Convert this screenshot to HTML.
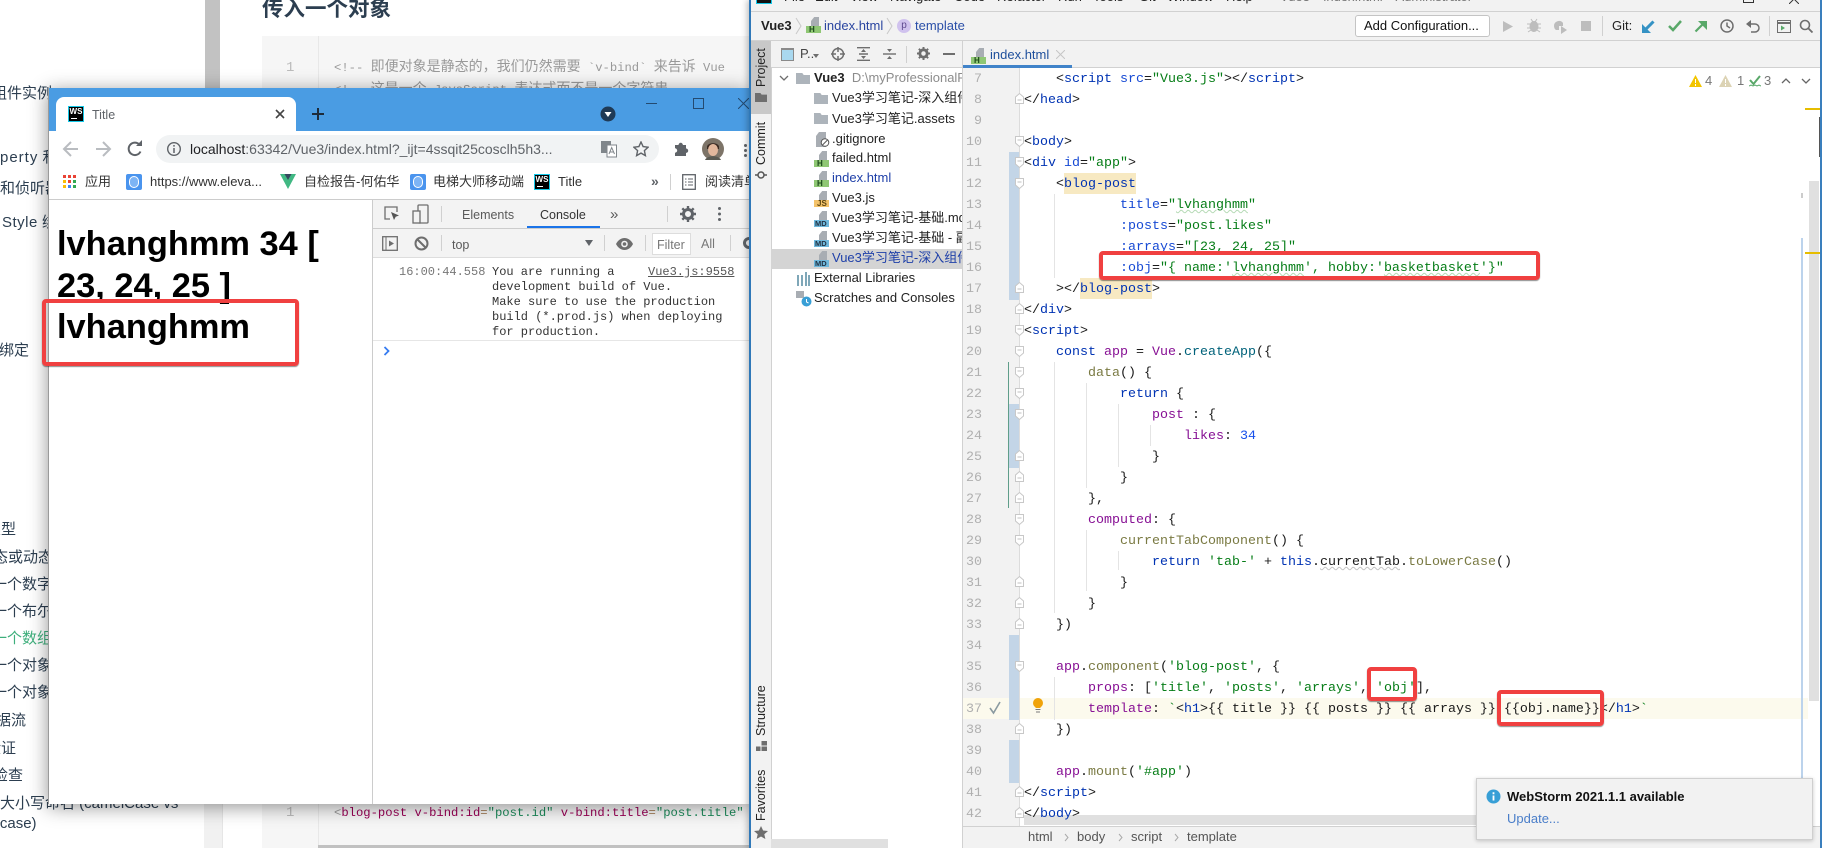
<!DOCTYPE html>
<html><head><meta charset="utf-8"><title>Vue3</title>
<style>
html,body{margin:0;padding:0;background:#fff}
body{position:relative;width:1822px;height:848px;overflow:hidden;font-family:"Liberation Sans","Noto Sans CJK SC",sans-serif;font-size:13px;color:#222}
.a{position:absolute}
.t{position:absolute;white-space:nowrap;line-height:20px}
.s{position:absolute;white-space:nowrap;line-height:20px;font-size:15px;color:#2c3e50}
.m{font-family:"Liberation Mono","Noto Sans CJK SC",monospace}
#chrome{position:absolute;left:48px;top:88px;width:701px;height:716px;background:#fff;overflow:hidden;box-shadow:0 3px 18px rgba(0,0,0,.42)}
#ide{position:absolute;left:749px;top:0;width:1073px;height:848px;background:#fff;overflow:hidden;box-shadow:-2px 0 6px rgba(0,0,0,.25)}
.bar{background:#f2f2f2}
pre{margin:0;position:absolute;font-family:"Liberation Mono",monospace;font-size:13.33px;line-height:21px;color:#1a1a1a}
.b{color:#0033b3}.at{color:#174ad4}.g{color:#067d17}.p{color:#871094}.o{color:#7a7a43}.n{color:#1750eb}.f{color:#00627a}
.w{text-decoration:underline wavy #b5dab5 1px}
.w2{text-decoration:underline wavy #c4c4c4 1px}
.red{position:absolute;border:4px solid #f04040;border-radius:4px;box-sizing:border-box;box-shadow:0 1px 1px rgba(0,0,0,.45);z-index:30}
.ws{position:absolute;width:16px;height:16px;background:#000;border:1.5px solid #14c8e8;box-sizing:border-box;color:#fff;font:bold 8px/9px "Liberation Sans",sans-serif;text-align:center;overflow:hidden}
.ws:after{content:"";position:absolute;left:2px;bottom:2px;width:6px;height:1.5px;background:#fff}
.fi{position:absolute;width:15px;height:16px;font:bold 8px/7px "Liberation Sans",sans-serif;font-style:normal;color:#1c4a1c;text-indent:3px}
.fi b{position:absolute;left:0;bottom:0;width:15px;height:7px;font-size:8px;line-height:7px;text-align:left;background:#8fc774}
.fi:before{content:"";position:absolute;left:5px;top:0;width:8px;height:9px;background:#a8adb3;clip-path:polygon(40% 0,100% 0,100% 100%,0 100%,0 45%)}
.fi.md b{background:#6fb8dc;color:#234;text-indent:1px;font-size:7.5px}
.fi.js b{background:#f4c36b;color:#5a4410}
.fo{position:absolute;width:14px;height:11px;background:#adb4bb;clip-path:polygon(0 0,45% 0,55% 18%,100% 18%,100% 100%,0 100%)}
.v{position:absolute;white-space:nowrap;transform:rotate(-90deg);transform-origin:0 0;font-size:12.5px;line-height:14px;color:#222}
.sep{position:absolute;width:1px;background:#d0d0d0}
.tree{position:absolute;white-space:nowrap;line-height:20px;font-size:13px;color:#222}
</style></head><body>

<!-- background docs page -->
<div class="a" style="left:205px;top:0;width:15px;height:90px;background:#c2c2c2"></div>
<div class="a" style="left:204px;top:800px;width:18px;height:48px;background:#f1f1f1;border-right:1px solid #e6e6e6"></div>
<div class="t" style="left:262px;top:-3px;font-size:21.5px;font-weight:bold;line-height:24px;color:#2c3e50">传入一个对象</div>
<div class="a" style="left:262px;top:36px;width:560px;height:812px;background:#f6f6f6"></div>
<div class="a" style="left:318px;top:36px;width:1px;height:812px;background:#e8e8e8"></div>
<div class="t m" style="left:286px;top:58px;color:#bbb;font-size:14px">1</div>
<div class="t m" style="left:334px;top:58px;color:#999;font-size:12.2px">&lt;!-- <span style="font-size:14px;letter-spacing:0">即便对象是静态的，我们仍然需要</span> `v-bind` <span style="font-size:14px">来告诉</span> Vue</div>
<div class="t m" style="left:334px;top:80px;color:#999;font-size:12.2px">&lt;!-- <span style="font-size:14px">这是一个</span> JavaScript <span style="font-size:14px">表达式而不是一个字符串</span></div>
<div class="t m" style="left:286px;top:803px;color:#bbb;font-size:14px">1</div>
<div class="t m" style="left:334px;top:803px;color:#999;font-size:12.2px">&lt;<span style="color:#905">blog-post v-bind:id</span><span style="color:#a67f59">=</span><span style="color:#1c8a5a">"post.id"</span> <span style="color:#905">v-bind:title</span><span style="color:#a67f59">=</span><span style="color:#1c8a5a">"post.title"</span></div>
<div class="a" style="left:318px;top:845px;width:431px;height:3px;background:#c1c1c1"></div>

<!-- sidebar -->
<div class="s" style="left:-8px;top:84px">组件实例</div>
<div class="s" style="left:0;top:148px"><span style="letter-spacing:1px">perty</span> 和</div>
<div class="s" style="left:0;top:179px">和侦听器</div>
<div class="s" style="left:2px;top:213px"><span style="letter-spacing:.5px">Style</span> 绑定</div>
<div class="s" style="left:-1px;top:341px">绑定</div>
<div class="s" style="left:-14px;top:520px">类型</div>
<div class="s" style="left:-22px;top:548px">静态或动态</div>
<div class="s" style="left:-23px;top:575px">入一个数字</div>
<div class="s" style="left:-23px;top:602px">入一个布尔</div>
<div class="s" style="left:-23px;top:629px;color:#3eaf7c">入一个数组</div>
<div class="s" style="left:-23px;top:656px">入一个对象</div>
<div class="s" style="left:-23px;top:683px">入一个对象</div>
<div class="s" style="left:-19px;top:711px">数据流</div>
<div class="s" style="left:-14px;top:739px">验证</div>
<div class="s" style="left:-22px;top:766px">型检查</div>
<div class="s" style="left:0;top:794px">大小写命名 (camelCase vs</div>
<div class="s" style="left:-46px;top:814px">kebab-case)</div>

<!-- Chrome window -->
<div id="chrome">
  <div class="a" style="left:0;top:0;width:701px;height:43px;background:#4a9ce3"></div>
  <div class="a" style="left:8px;top:9px;width:240px;height:34px;background:#fff;border-radius:8px 8px 0 0"></div>
  <div class="ws" style="left:20px;top:18px">WS</div>
  <div class="t" style="left:44px;top:17px;font-size:12.5px;color:#5f6368">Title</div>
  <svg class="a" style="left:226px;top:20px" width="12" height="12" viewBox="0 0 12 12"><path d="M2 2l8 8M10 2l-8 8" stroke="#444" stroke-width="1.6"/></svg>
  <svg class="a" style="left:262px;top:18px" width="16" height="16" viewBox="0 0 16 16"><path d="M8 2v12M2 8h12" stroke="#1d2b3a" stroke-width="2"/></svg>
  <svg class="a" style="left:552px;top:18px" width="16" height="16" viewBox="0 0 16 16"><circle cx="8" cy="8" r="7.5" fill="#1f3a56"/><path d="M4.5 6h7L8 11z" fill="#fff"/></svg>
  <div class="a" style="left:598px;top:15px;width:11px;height:1px;background:#244a70"></div>
  <div class="a" style="left:645px;top:10px;width:9px;height:9px;border:1px solid #244a70"></div>
  <svg class="a" style="left:690px;top:10px" width="11" height="11"><path d="M0 0l11 11M11 0L0 11" stroke="#244a70" stroke-width="1"/></svg>

  <!-- toolbar -->
  <svg class="a" style="left:13px;top:52px" width="20" height="18" viewBox="0 0 20 18"><path d="M17 9H4M10 2L3 9l7 7" fill="none" stroke="#b9bcc0" stroke-width="2"/></svg>
  <svg class="a" style="left:45px;top:52px" width="20" height="18" viewBox="0 0 20 18"><path d="M3 9h13M10 2l7 7-7 7" fill="none" stroke="#b9bcc0" stroke-width="2"/></svg>
  <svg class="a" style="left:78px;top:52px" width="18" height="18" viewBox="0 0 18 18"><path d="M14.5 11.5A6.2 6.2 0 1 1 13.4 4.6" fill="none" stroke="#5f6368" stroke-width="2"/><path d="M10 6h6V0z" fill="#5f6368"/></svg>
  <div class="a" style="left:108px;top:47px;width:503px;height:28px;background:#f1f3f4;border-radius:14px"></div>
  <svg class="a" style="left:118px;top:53px" width="16" height="16" viewBox="0 0 16 16"><circle cx="8" cy="8" r="6.3" fill="none" stroke="#5f6368" stroke-width="1.4"/><path d="M8 7v5M8 4v1.6" stroke="#5f6368" stroke-width="1.5"/></svg>
  <div class="t" style="left:142px;top:51px;font-size:14px;color:#5f6368"><span style="color:#202124">localhost</span>:63342/Vue3/index.html?_ijt=4ssqit25cosclh5h3...</div>
  <svg class="a" style="left:553px;top:52px" width="16" height="18" viewBox="0 0 16 18"><rect x="0" y="1" width="10" height="12" fill="#80868b"/><rect x="6" y="5" width="9.5" height="12" fill="#fff" stroke="#80868b"/><path d="M8 14l2.7-6.5L13.5 14M9 12h3.5" fill="none" stroke="#80868b"/></svg>
  <svg class="a" style="left:585px;top:53px" width="16" height="16" viewBox="0 0 16 16"><path d="M8 1l2.1 4.6 5 .6-3.7 3.4 1 5L8 12.1 3.6 14.6l1-5L.9 6.2l5-.6z" fill="none" stroke="#5f6368" stroke-width="1.4"/></svg>
  <svg class="a" style="left:625px;top:52px" width="16" height="18" viewBox="0 0 16 18"><path d="M2 5h3.500a2.200 2.200 0 1 1 4.400 0H13v3.500a2.200 2.200 0 1 1 0 4.400V16H2v-3.300a2.200 2.200 0 1 0 0-4.400z" fill="#5f6368"/></svg>
  <svg class="a" style="left:654px;top:50px" width="22" height="22" viewBox="0 0 22 22"><ellipse cx="11" cy="11" rx="11" ry="11" fill="#7d7468"/><path d="M5 9c0-5 12-5 12 0v2H5z" fill="#3a2a22"/><ellipse cx="11" cy="12" rx="5" ry="6" fill="#e2b79c"/><path d="M3 22c2-5 14-5 16 0z" fill="#5a5a52"/></svg>
  <div class="a" style="left:696px;top:56px;width:3px;height:3px;border-radius:2px;background:#5f6368;box-shadow:0 5px 0 #5f6368,0 10px 0 #5f6368"></div>

  <!-- bookmarks -->
  <div class="a" style="left:15px;top:87px;width:3px;height:3px;background:#e94335;box-shadow:5px 0 #e94335,10px 0 #e94335,0 5px #fbbc05,5px 5px #e94335,10px 5px #34a853,0 10px #fbbc05,5px 10px #4285f4,10px 10px #34a853"></div>
  <div class="t" style="left:37px;top:84px;font-size:13px;color:#333">应用</div>
  <div class="a" style="left:78px;top:86px;width:16px;height:16px;background:#4a94ee;border-radius:2px"><div class="a" style="left:3px;top:2px;width:8px;height:10px;border:1px solid #fff;border-radius:6px;background:#7db4f5"></div></div>
  <div class="t" style="left:102px;top:84px;font-size:13px;color:#333">https://www.eleva...</div>
  <svg class="a" style="left:232px;top:86px" width="16" height="15" viewBox="0 0 16 15"><path d="M0 0h16L8 15z" fill="#41b883"/><path d="M4.500 0h7L8 6z" fill="#35495e"/></svg>
  <div class="t" style="left:256px;top:84px;font-size:13px;color:#333">自检报告-何佑华</div>
  <div class="a" style="left:362px;top:86px;width:16px;height:16px;background:#4a94ee;border-radius:2px"><div class="a" style="left:3px;top:2px;width:8px;height:10px;border:1px solid #fff;border-radius:6px;background:#7db4f5"></div></div>
  <div class="t" style="left:385px;top:84px;font-size:13px;color:#333">电梯大师移动端</div>
  <div class="ws" style="left:486px;top:86px">WS</div>
  <div class="t" style="left:510px;top:84px;font-size:13px;color:#333">Title</div>
  <div class="t" style="left:603px;top:83px;font-size:14px;color:#5f6368;font-weight:bold">»</div>
  <div class="sep" style="left:622px;top:86px;height:16px"></div>
  <svg class="a" style="left:634px;top:86px" width="14" height="16" viewBox="0 0 14 16"><rect x=".7" y=".7" width="12.6" height="14.6" fill="none" stroke="#5f6368" stroke-width="1.3"/><path d="M3 5h1.500M6 5h5M3 8h1.500M6 8h5M3 11h1.500M6 11h5" stroke="#5f6368"/></svg>
  <div class="t" style="left:657px;top:84px;font-size:13px;color:#333">阅读清单</div>

  <div class="a" style="left:0;top:111px;width:701px;height:1px;background:#ccc"></div>

  <!-- page -->
  <div class="a" style="left:9px;top:136px;width:300px;font:bold 34.4px/41.7px 'Liberation Sans',sans-serif;color:#000">lvhanghmm 34 [<br>23, 24, 25 ]<br>lvhanghmm</div>
  <div class="a" style="left:324px;top:112px;width:1px;height:604px;background:#ccc"></div>

  <!-- devtools -->
  <div class="a" style="left:325px;top:112px;width:376px;height:28px;background:#f3f3f3;border-bottom:1px solid #ccc"></div>
  <svg class="a" style="left:335px;top:117px" width="18" height="18" viewBox="0 0 18 18"><path d="M7 14H2V2h12v5" fill="none" stroke="#6e6e6e" stroke-width="1.3"/><path d="M8 7l8 3.500-3.300 1.200L11 15z" fill="#555"/></svg>
  <svg class="a" style="left:364px;top:116px" width="18" height="20" viewBox="0 0 18 20"><rect x="6" y="1" width="10" height="18" rx="1" fill="none" stroke="#6e6e6e" stroke-width="1.3"/><rect x="1" y="7" width="7" height="12" fill="#f3f3f3" stroke="#6e6e6e" stroke-width="1.3"/></svg>
  <div class="sep" style="left:393px;top:118px;height:16px"></div>
  <div class="t" style="left:414px;top:117px;font-size:12.5px;color:#5a5a5a">Elements</div>
  <div class="t" style="left:492px;top:117px;font-size:12.5px;color:#333">Console</div>
  <div class="a" style="left:479px;top:138px;width:73px;height:2px;background:#1a73e8"></div>
  <div class="t" style="left:562px;top:117px;font-size:15px;color:#5a5a5a">»</div>
  <div class="sep" style="left:619px;top:118px;height:16px"></div>
  <svg class="a" style="left:632px;top:117px" width="16" height="18" viewBox="0 0 16 16"><circle cx="8" cy="8" r="4.500" fill="none" stroke="#5f6368" stroke-width="3"/><path d="M8 0v3M8 13v3M0 8h3M13 8h3M2.300 2.300l2 2M11.700 11.700l2 2M2.300 13.700l2-2M11.700 4.300l2-2" stroke="#5f6368" stroke-width="2.4"/></svg>
  <div class="a" style="left:670px;top:119px;width:3px;height:3px;border-radius:2px;background:#5f6368;box-shadow:0 5.500px 0 #5f6368,0 11px 0 #5f6368"></div>

  <div class="a" style="left:325px;top:141px;width:376px;height:28px;background:#f3f3f3;border-bottom:1px solid #ddd"></div>
  <svg class="a" style="left:334px;top:148px" width="16" height="15" viewBox="0 0 16 15"><rect x=".7" y=".7" width="14.6" height="13.6" fill="none" stroke="#6e6e6e" stroke-width="1.3"/><path d="M4 1v13" stroke="#6e6e6e"/><path d="M7 4.500l5 3-5 3z" fill="#6e6e6e"/></svg>
  <svg class="a" style="left:366px;top:148px" width="15" height="15" viewBox="0 0 15 15"><circle cx="7.500" cy="7.500" r="6" fill="none" stroke="#6e6e6e" stroke-width="2"/><path d="M3.500 3.500l8 8" stroke="#6e6e6e" stroke-width="2"/></svg>
  <div class="sep" style="left:393px;top:147px;height:16px"></div>
  <div class="t" style="left:404px;top:147px;font-size:12.5px;color:#5a5a5a">top</div>
  <div class="a" style="left:537px;top:152px;width:0;height:0;border-left:4px solid transparent;border-right:4px solid transparent;border-top:6px solid #5f6368"></div>
  <div class="sep" style="left:556px;top:147px;height:16px"></div>
  <svg class="a" style="left:568px;top:150px" width="17" height="12" viewBox="0 0 17 12"><path d="M0 6c4-8 13-8 17 0-4 8-13 8-17 0z" fill="#6e6e6e"/><circle cx="8.500" cy="6" r="3.300" fill="#f3f3f3"/><circle cx="8.500" cy="6" r="1.800" fill="#6e6e6e"/></svg>
  <div class="sep" style="left:597px;top:147px;height:16px"></div>
  <div class="a" style="left:604px;top:145px;width:39px;height:22px;background:#fff;box-sizing:border-box;border:1px solid #ddd"></div>
  <div class="t" style="left:609px;top:147px;font-size:12.5px;color:#777">Filter</div>
  <div class="t" style="left:653px;top:146px;font-size:12.5px;color:#777">All</div>
  <div class="sep" style="left:682px;top:147px;height:16px"></div>
  <svg class="a" style="left:693px;top:147px" width="16" height="16" viewBox="0 0 16 16"><circle cx="8" cy="8" r="4.500" fill="none" stroke="#5f6368" stroke-width="3"/></svg>

  <div class="t m" style="left:351px;top:174px;font-size:12px;line-height:20px;color:#777">16:00:44.558</div>
  <div class="a m" style="left:444px;top:177px;font-size:12px;line-height:15px;color:#333;white-space:pre">You are running a
development build of Vue.
Make sure to use the production
build (*.prod.js) when deploying
for production.</div>
  <div class="t m" style="left:600px;top:174px;font-size:12px;color:#555;text-decoration:underline">Vue3.js:9558</div>
  <div class="a" style="left:325px;top:252px;width:376px;height:1px;background:#e6e6e6"></div>
  <svg class="a" style="left:335px;top:258px" width="8" height="10" viewBox="0 0 8 10"><path d="M1.500 1l4 4-4 4" fill="none" stroke="#367cf1" stroke-width="1.8"/></svg>
  <div class="a" style="left:0;top:0;width:1px;height:716px;background:#9a9a9a"></div>
</div>
<div class="red" style="left:42px;top:299px;width:257px;height:67px;border-width:4px"></div>

<!-- IDE -->
<div id="ide">
  <div class="a" style="left:0;top:0;width:1.5px;height:848px;background:#2f78b8;z-index:20"></div>
  <div class="a" style="right:0;top:0;width:2px;height:848px;background:#3a7fbd;z-index:20"></div>
  <div class="a bar" style="left:1px;top:0;width:1072px;height:41px;border-bottom:1px solid #d1d1d1;box-sizing:border-box"></div>
  <div class="a" style="left:1px;top:11px;width:1072px;height:1px;background:#d1d1d1"></div>
  <div class="a" style="left:7px;top:0;width:16px;height:4px;background:#111;border:1px solid #14c8e8;border-top:0;box-sizing:border-box"></div>
  <div class="t" style="left:35px;top:-13px">File</div><div class="t" style="left:66px;top:-13px">Edit</div><div class="t" style="left:101px;top:-13px">View</div><div class="t" style="left:141px;top:-13px">Navigate</div><div class="t" style="left:205px;top:-13px">Code</div><div class="t" style="left:248px;top:-13px">Refactor</div><div class="t" style="left:309px;top:-13px">Run</div><div class="t" style="left:344px;top:-13px">Tools</div><div class="t" style="left:390px;top:-13px">Git</div><div class="t" style="left:418px;top:-13px">Window</div><div class="t" style="left:477px;top:-13px">Help</div>
  <div class="t" style="left:531px;top:-13px;color:#777;word-spacing:1px">Vue3 - index.html - Administrator</div>
  <div class="a" style="left:994px;top:-8px;width:9px;height:9px;border:1px solid #333"></div>
  <svg class="a" style="left:1040px;top:-6px" width="10" height="10"><path d="M0 0l10 10M10 0L0 10" stroke="#333"/></svg>

  <!-- nav bar -->
  <div class="t" style="left:12px;top:16px;font-weight:bold;font-size:13px">Vue3</div>
  <svg class="a" style="left:46px;top:17px" width="7" height="18"><path d="M1 1l5 8-5 8" fill="none" stroke="#c8c8c8"/></svg>
  <i class="fi" style="left:57px;top:17px"><b>H</b></i>
  <div class="t" style="left:75px;top:16px;color:#2a45a0">index.html</div>
  <svg class="a" style="left:137px;top:17px" width="7" height="18"><path d="M1 1l5 8-5 8" fill="none" stroke="#c8c8c8"/></svg>
  <div class="a" style="left:148px;top:19px;width:14px;height:14px;border-radius:7px;background:#d0c2ee;color:#5f4a90;font-size:10px;line-height:14px;text-align:center">p</div>
  <div class="t" style="left:166px;top:16px;color:#2a4fa8">template</div>
  <div class="a" style="left:606px;top:15px;width:135px;height:22px;background:#fff;border:1px solid #c4c4c4;border-radius:3px;box-sizing:border-box"></div>
  <div class="t" style="left:615px;top:16px;font-size:13px;color:#111">Add Configuration...</div>
  <svg class="a" style="left:753px;top:20px" width="12" height="13"><path d="M1 1l10 5.500L1 12z" fill="#bdbdbd"/></svg>
  <svg class="a" style="left:778px;top:18px" width="14" height="15" viewBox="0 0 14 15"><ellipse cx="7" cy="8.500" rx="4.500" ry="5.500" fill="#bdbdbd"/><path d="M4 1l2 3M10 1L8 4M0 6h14M0 10h14M1 14l3-2M13 14l-3-2" stroke="#bdbdbd"/></svg>
  <svg class="a" style="left:804px;top:19px" width="15" height="15" viewBox="0 0 15 15"><path d="M1 7a5 5 0 0 1 9-3v3H6v4H3A5 5 0 0 1 1 7z" fill="#bdbdbd"/><path d="M8 7l6 4-6 4z" fill="#bdbdbd"/></svg>
  <div class="a" style="left:832px;top:21px;width:10px;height:10px;background:#bdbdbd"></div>
  <div class="sep" style="left:853px;top:16px;height:20px"></div>
  <div class="t" style="left:863px;top:16px;font-size:13px;color:#222">Git:</div>
  <svg class="a" style="left:893px;top:20px" width="13" height="13" viewBox="0 0 13 13"><path d="M11.500 1.500L3 10" stroke="#3592c4" stroke-width="3"/><path d="M0 4v9h9z" fill="#3592c4"/></svg>
  <svg class="a" style="left:919px;top:20px" width="14" height="12" viewBox="0 0 14 12"><path d="M1 6l4 4 8-9" fill="none" stroke="#59a869" stroke-width="2.5"/></svg>
  <svg class="a" style="left:945px;top:20px" width="13" height="13" viewBox="0 0 13 13"><path d="M1.500 11.500L9.500 3.500" stroke="#59a869" stroke-width="2.2"/><path d="M4 1h9v9z" fill="#59a869"/></svg>
  <svg class="a" style="left:971px;top:19px" width="14" height="14" viewBox="0 0 14 14"><circle cx="7" cy="7" r="6" fill="none" stroke="#6e6e6e" stroke-width="1.5"/><path d="M7 3.500V7l3 2" fill="none" stroke="#6e6e6e" stroke-width="1.5"/></svg>
  <svg class="a" style="left:997px;top:19px" width="14" height="14" viewBox="0 0 14 14"><path d="M4 5h5a4 4 0 0 1 0 8H5" fill="none" stroke="#6e6e6e" stroke-width="1.5"/><path d="M5 1v8L0 5z" fill="#6e6e6e"/></svg>
  <div class="sep" style="left:1020px;top:16px;height:20px"></div>
  <svg class="a" style="left:1028px;top:20px" width="14" height="13" viewBox="0 0 14 13"><rect x=".5" y=".5" width="13" height="12" fill="none" stroke="#6e6e6e"/><path d="M.5 3h13" stroke="#6e6e6e" stroke-width="2"/><path d="M4 5.500l4 2.500-4 2.500z" fill="#59a869"/></svg>
  <svg class="a" style="left:1050px;top:19px" width="14" height="14" viewBox="0 0 14 14"><circle cx="6" cy="6" r="4.500" fill="none" stroke="#6e6e6e" stroke-width="1.6"/><path d="M9 9l4.500 4.500" stroke="#6e6e6e" stroke-width="1.8"/></svg>

  <!-- left strip -->
  <div class="a bar" style="left:1px;top:41px;width:21px;height:807px;border-right:1px solid #d1d1d1"></div>
  <div class="a" style="left:1px;top:41px;width:21px;height:73px;background:#c8c8c8"></div>
  <div class="v" style="left:5px;top:87px">Project</div>
  <div class="a" style="left:6px;top:93px;width:12px;height:9px;background:#6e6e6e;clip-path:polygon(0 0,45% 0,55% 18%,100% 18%,100% 100%,0 100%)"></div>
  <div class="v" style="left:5px;top:165px">Commit</div>
  <svg class="a" style="left:6px;top:169px" width="12" height="12" viewBox="0 0 12 12"><circle cx="6" cy="6" r="3" fill="none" stroke="#555" stroke-width="1.5"/><path d="M0 6h3M9 6h3" stroke="#555" stroke-width="1.5"/></svg>
  <div class="v" style="left:5px;top:736px">Structure</div>
  <svg class="a" style="left:7px;top:741px" width="11" height="10"><path d="M5.500 0H11v4.500H5.500zM0 5.500h4.500V10H0zM5.500 5.500H11V10H5.500z" fill="#6e6e6e"/></svg>
  <div class="v" style="left:5px;top:821px">Favorites</div>
  <svg class="a" style="left:5px;top:826px" width="14" height="13" viewBox="0 0 14 13"><path d="M7 0l2.100 4.500 4.900.5-3.700 3.300L11.400 13 7 10.500 2.600 13l1.100-4.700L0 5l4.900-.5z" fill="#6e6e6e"/></svg>

  <!-- project tool window -->
  <div class="a bar" style="left:22px;top:41px;width:191px;height:27px;border-bottom:1px solid #d1d1d1;box-sizing:border-box"></div>
  <svg class="a" style="left:32px;top:48px" width="13" height="13"><rect x=".5" y=".5" width="12" height="12" fill="#a9d8ef" stroke="#8a8a8a"/><path d="M0 1h13" stroke="#8a8a8a" stroke-width="2"/></svg>
  <div class="t" style="left:51px;top:44px;color:#444">P..</div>
  <div class="a" style="left:64px;top:54px;border-left:3.5px solid transparent;border-right:3.5px solid transparent;border-top:4px solid #6e6e6e"></div>
  <svg class="a" style="left:82px;top:47px" width="14" height="14" viewBox="0 0 14 14"><circle cx="7" cy="7" r="5.500" fill="none" stroke="#6e6e6e" stroke-width="1.5"/><path d="M7 0v5M7 9v5M0 7h5M9 7h5" stroke="#6e6e6e" stroke-width="1.5"/></svg>
  <svg class="a" style="left:108px;top:47px" width="13" height="14" viewBox="0 0 13 14"><path d="M0 .7h13M0 13.300h13M2 7h9" stroke="#6e6e6e" stroke-width="1.4"/><path d="M6.500 2L9 5H4zM6.500 12L9 9H4z" fill="#6e6e6e"/></svg>
  <svg class="a" style="left:134px;top:47px" width="13" height="14" viewBox="0 0 13 14"><path d="M0 7h13" stroke="#6e6e6e" stroke-width="1.4"/><path d="M6.500 5L9 2H4zM6.500 9L9 12H4z" fill="#6e6e6e"/></svg>
  <div class="sep" style="left:157px;top:46px;height:17px"></div>
  <svg class="a" style="left:168px;top:47px" width="13" height="13" viewBox="0 0 16 16"><circle cx="8" cy="8" r="4.500" fill="none" stroke="#6e6e6e" stroke-width="3.5"/><path d="M8 0v3M8 13v3M0 8h3M13 8h3M2.300 2.300l2 2M11.700 11.700l2 2M2.300 13.700l2-2M11.700 4.300l2-2" stroke="#6e6e6e" stroke-width="2.4"/></svg>
  <div class="a" style="left:194px;top:53px;width:12px;height:2px;background:#6e6e6e"></div>

  <div class="a" style="left:22px;top:249px;width:191px;height:20px;background:#d4d4d4"></div>
  <svg class="a" style="left:30px;top:75px" width="10" height="7"><path d="M1 1l4 4 4-4" fill="none" stroke="#6e6e6e" stroke-width="1.3"/></svg>
  <div class="fo" style="left:47px;top:73px"></div>
  <div class="tree" style="left:65px;top:68px;width:148px;overflow:hidden"><b>Vue3</b>&nbsp; <span style="color:#8c8c8c">D:\myProfessionalProject</span></div>
  <div class="fo" style="left:65px;top:93px"></div><div class="tree" style="left:83px;top:88px;width:130px;overflow:hidden">Vue3学习笔记-深入组件</div>
  <div class="fo" style="left:65px;top:113px"></div><div class="tree" style="left:83px;top:109px">Vue3学习笔记.assets</div>
  <svg class="a" style="left:67px;top:132px" width="14" height="15" viewBox="0 0 14 15"><path d="M3 0h7v15H0V4z" fill="#a8adb3"/><circle cx="9" cy="10.500" r="3.800" fill="#fff" stroke="#555"/><path d="M6.500 13l5-5" stroke="#555"/></svg><div class="tree" style="left:83px;top:129px">.gitignore</div>
  <i class="fi" style="left:65px;top:151px"><b>H</b></i><div class="tree" style="left:83px;top:148px">failed.html</div>
  <i class="fi" style="left:65px;top:171px"><b>H</b></i><div class="tree" style="left:83px;top:168px;color:#1e3fa8">index.html</div>
  <i class="fi js" style="left:65px;top:191px"><b>JS</b></i><div class="tree" style="left:83px;top:188px">Vue3.js</div>
  <i class="fi md" style="left:65px;top:211px"><b>MD</b></i><div class="tree" style="left:83px;top:208px;width:130px;overflow:hidden">Vue3学习笔记-基础.md</div>
  <i class="fi md" style="left:65px;top:231px"><b>MD</b></i><div class="tree" style="left:83px;top:228px;width:130px;overflow:hidden">Vue3学习笔记-基础 - 副本.md</div>
  <i class="fi md" style="left:65px;top:251px"><b>MD</b></i><div class="tree" style="left:83px;top:248px;width:130px;overflow:hidden;color:#1e3fa8">Vue3学习笔记-深入组件.md</div>
  <svg class="a" style="left:47px;top:272px" width="14" height="14"><path d="M1 3h2v11H1zM5 3h2v11H5zM9 0h2v14H9zM12 3h2v11h-2z" fill="#7fa7b8"/></svg><div class="tree" style="left:65px;top:268px">External Libraries</div>
  <svg class="a" style="left:47px;top:291px" width="16" height="16" viewBox="0 0 16 16"><path d="M0 0h8v7H0z" fill="#a8adb3"/><circle cx="10.500" cy="10.500" r="5" fill="#389fd6"/><path d="M10.500 8v3l2 1" fill="none" stroke="#fff"/></svg><div class="tree" style="left:65px;top:288px">Scratches and Consoles</div>
  <div class="a" style="left:22px;top:839px;width:117px;height:9px;background:#e0e0e0"></div>

  <!-- editor tabs -->
  <div class="a bar" style="left:213px;top:41px;width:860px;height:27px;border-bottom:1px solid #d1d1d1;box-sizing:border-box"></div>
  <div class="a" style="left:213px;top:41px;width:1px;height:807px;background:#d1d1d1"></div>
  <div class="a" style="left:214px;top:65px;width:109px;height:3px;background:#4083c9"></div>
  <i class="fi" style="left:222px;top:48px"><b>H</b></i>
  <div class="t" style="left:241px;top:45px;color:#1e4f9c">index.html</div>
  <svg class="a" style="left:307px;top:50px" width="9" height="9"><path d="M0 0l9 9M9 0L0 9" stroke="#c6c6c6"/></svg>

  <!-- gutter -->
  <div class="a bar" style="left:214px;top:68px;width:56px;height:758px"></div>
  <div class="a" style="left:214px;top:698px;width:845px;height:21px;background:#fcfaed"></div>
  <div class="a" style="left:260px;top:152px;width:10px;height:148px;background:#c3d5e7"></div>
  <div class="a" style="left:260px;top:404px;width:10px;height:64px;background:#c3d5e7"></div>
  <div class="a" style="left:259px;top:362px;width:1px;height:146px;background:#5f9e8a"></div>
  <div class="a" style="left:260px;top:635px;width:10px;height:85px;background:#c3d5e7"></div>
  <div class="a" style="left:260px;top:740px;width:10px;height:43px;background:#c3d5e7"></div>
  <div class="a" style="left:270px;top:68px;width:1px;height:758px;background:#dcdcdc"></div>
  <pre style="left:201px;top:69px;width:32px;text-align:right;color:#b0b0b0">7
8
9
10
11
12
13
14
15
16
17
18
19
20
21
22
23
24
25
26
27
28
29
30
31
32
33
34
35
36
37
38
39
40
41
42</pre>
  <svg class="a" style="left:240px;top:701px" width="12" height="14"><path d="M1 7l3.500 5L11 1" fill="none" stroke="#8a9aa0" stroke-width="1.6"/></svg>
  <svg class="a" style="left:284px;top:698px" width="10" height="16" viewBox="0 0 10 16"><circle cx="5" cy="5" r="5" fill="#f0a30a"/><path d="M2.500 8h5v2h-5z" fill="#f0a30a"/><path d="M2.500 11.500h5M3 14h4" stroke="#7a7a7a"/></svg>

  <!-- fold markers -->
  <svg class="a" style="left:0;top:0;z-index:2" width="300" height="848">
    <defs>
      <g id="fs"><path d="M-4-4.500h8v6.500l-4 3.500-4-3.500z" fill="#fff" stroke="#c8c8c8"/><path d="M-2-1h4" stroke="#c0c0c0"/></g>
      <g id="fe"><path d="M-4 4.500h8v-6.500l-4-3.500-4 3.500z" fill="#fff" stroke="#c8c8c8"/><path d="M-2 1h4" stroke="#c0c0c0"/></g>
    </defs>
    <use href="#fe" x="270.500" y="99"/><use href="#fs" x="270.500" y="141"/><use href="#fs" x="270.500" y="162"/><use href="#fs" x="270.500" y="183"/><use href="#fe" x="270.500" y="288"/><use href="#fe" x="270.500" y="309"/><use href="#fs" x="270.500" y="330"/><use href="#fs" x="270.500" y="351"/><use href="#fs" x="270.500" y="372"/><use href="#fs" x="270.500" y="393"/><use href="#fs" x="270.500" y="414"/><use href="#fe" x="270.500" y="456"/><use href="#fe" x="270.500" y="477"/><use href="#fe" x="270.500" y="498"/><use href="#fs" x="270.500" y="519"/><use href="#fs" x="270.500" y="540"/><use href="#fe" x="270.500" y="582"/><use href="#fe" x="270.500" y="603"/><use href="#fe" x="270.500" y="624"/><use href="#fs" x="270.500" y="666"/><use href="#fe" x="270.500" y="729"/><use href="#fe" x="270.500" y="792"/><use href="#fe" x="270.500" y="813"/>
  </svg>
  <div class="a" style="left:305px;top:194px;width:1px;height:84px;background:#e4e4e4"></div>
  <div class="a" style="left:305px;top:362px;width:1px;height:251px;background:#e4e4e4"></div>
  <div class="a" style="left:337px;top:383px;width:1px;height:105px;background:#e4e4e4"></div>
  <div class="a" style="left:337px;top:530px;width:1px;height:61px;background:#e4e4e4"></div>
  <div class="a" style="left:369px;top:404px;width:1px;height:63px;background:#e4e4e4"></div>
  <div class="a" style="left:369px;top:551px;width:1px;height:19px;background:#e4e4e4"></div>
  <div class="a" style="left:401px;top:425px;width:1px;height:21px;background:#e4e4e4"></div>
  <div class="a" style="left:305px;top:677px;width:1px;height:43px;background:#e4e4e4"></div>

  <!-- tag highlight -->
  <div class="a" style="left:315px;top:173px;width:72px;height:21px;background:#f7e9c2"></div>
  <div class="a" style="left:331px;top:278px;width:72px;height:21px;background:#f7e9c2"></div>

  <pre style="left:275px;top:69px;z-index:3">    &lt;<span class="b">script</span> <span class="at">src</span>=<span class="g">"Vue3.js"</span>&gt;&lt;/<span class="b">script</span>&gt;
&lt;/<span class="b">head</span>&gt;

&lt;<span class="b">body</span>&gt;
&lt;<span class="b">div</span> <span class="at">id</span>=<span class="g">"app"</span>&gt;
    &lt;<span class="b">blog-post</span>
            <span class="at">title</span>=<span class="g">"<span class="w">lvhanghmm</span>"</span>
            <span class="at">:posts</span>=<span class="g">"post.likes"</span>
            <span class="at">:arrays</span>=<span class="g">"[23, 24, 25]"</span>
            <span class="at">:obj</span>=<span class="g">"{ name:'<span class="w">lvhanghmm</span>', hobby:'<span class="w">basketbasket</span>'}"</span>
    &gt;&lt;/<span class="b">blog-post</span>&gt;
&lt;/<span class="b">div</span>&gt;
&lt;<span class="b">script</span>&gt;
    <span class="b">const</span> <span class="p">app</span> = <span class="p">Vue</span>.<span class="f">createApp</span>({
        <span class="o">data</span>() {
            <span class="b">return</span> {
                <span class="p">post</span> : {
                    <span class="p">likes</span>: <span class="n">34</span>
                }
            }
        },
        <span class="p">computed</span>: {
            <span class="o">currentTabComponent</span>() {
                <span class="b">return</span> <span class="g">'tab-'</span> + <span class="b">this</span>.<span class="w2">currentTab</span>.<span class="o">toLowerCase</span>()
            }
        }
    })

    <span class="p">app</span>.<span class="o">component</span>(<span class="g">'blog-post'</span>, {
        <span class="p">props</span>: [<span class="g">'title'</span>, <span class="g">'posts'</span>, <span class="g">'arrays'</span>, <span class="g">'obj'</span>],
        <span class="p">template</span>: <span class="g">`</span>&lt;<span class="b">h1</span>&gt;{{ title }} {{ posts }} {{ arrays }} {{obj.name}}&lt;/<span class="b">h1</span>&gt;<span class="g">`</span>
    })

    <span class="p">app</span>.<span class="o">mount</span>(<span class="g">'#app'</span>)
&lt;/<span class="b">script</span>&gt;
&lt;/<span class="b">body</span>&gt;</pre>

  <!-- right side -->
  <svg class="a" style="left:940px;top:75px" width="13" height="12"><path d="M6.500 0L13 12H0z" fill="#f2c500"/><path d="M6.500 4v4M6.500 9v2" stroke="#fff"/></svg>
  <div class="t" style="left:956px;top:71px;color:#777">4</div>
  <svg class="a" style="left:970px;top:75px" width="13" height="12"><path d="M6.500 0L13 12H0z" fill="#dcd3b4"/><path d="M6.500 4v4M6.500 9v2" stroke="#fff"/></svg>
  <div class="t" style="left:988px;top:71px;color:#777">1</div>
  <svg class="a" style="left:1000px;top:75px" width="12" height="13"><path d="M1 5l3.500 4L11 1" fill="none" stroke="#59a869" stroke-width="2"/><path d="M0 11l2-1 2 1 2-1 2 1 2-1 2 1" fill="none" stroke="#59a869"/></svg>
  <div class="t" style="left:1015px;top:71px;color:#777">3</div>
  <svg class="a" style="left:1032px;top:78px" width="10" height="6"><path d="M1 5l4-4 4 4" fill="none" stroke="#666" stroke-width="1.3"/></svg>
  <svg class="a" style="left:1052px;top:78px" width="10" height="6"><path d="M1 1l4 4 4-4" fill="none" stroke="#666" stroke-width="1.3"/></svg>
  <div class="a" style="left:1060px;top:181px;width:10px;height:520px;background:#e0e0e0"></div>
  <div class="a" style="left:1052px;top:238px;width:2px;height:610px;background:#bcd3ec"></div>
  <div class="a" style="left:1052px;top:193px;width:2px;height:5px;background:#ccc"></div>
  <div class="a" style="left:1056px;top:108px;width:15px;height:2px;background:#e6bd00"></div>
  <div class="a" style="left:1056px;top:252px;width:15px;height:2px;background:#e6bd00"></div>
  <div class="a" style="left:1070px;top:117px;width:1px;height:40px;background:#555"></div>

  <!-- bottom breadcrumb -->
  <div class="a" style="left:275px;top:815px;width:460px;height:10px;background:#e0e0e0"></div>
  <div class="a bar" style="left:214px;top:826px;width:859px;height:22px;border-top:1px solid #d1d1d1;box-sizing:border-box"></div>
  <div class="t" style="left:279px;top:827px;color:#555">html</div>
  <div class="t" style="left:328px;top:827px;color:#555">body</div>
  <div class="t" style="left:382px;top:827px;color:#555">script</div>
  <div class="t" style="left:438px;top:827px;color:#555">template</div>
  <svg class="a" style="left:315px;top:833px" width="5" height="9"><path d="M1 1l3 3.500L1 8" fill="none" stroke="#aaa"/></svg>
  <svg class="a" style="left:369px;top:833px" width="5" height="9"><path d="M1 1l3 3.500L1 8" fill="none" stroke="#aaa"/></svg>
  <svg class="a" style="left:425px;top:833px" width="5" height="9"><path d="M1 1l3 3.500L1 8" fill="none" stroke="#aaa"/></svg>

  <!-- notification -->
  <div class="a" style="left:727px;top:778px;width:337px;height:62px;background:#f2f2f2;border:1px solid #cfcfcf;box-sizing:border-box;box-shadow:0 1px 4px rgba(0,0,0,.2);z-index:5">
    <svg class="a" style="left:9px;top:10px" width="15" height="15" viewBox="0 0 15 15"><circle cx="7.500" cy="7.500" r="7" fill="#389fd6"/><path d="M7.500 6.500v5M7.500 3.200v2" stroke="#fff" stroke-width="1.8"/></svg>
    <div class="t" style="left:30px;top:8px;font-weight:bold;font-size:13px;color:#111">WebStorm 2021.1.1 available</div>
    <div class="t" style="left:30px;top:30px;color:#4a7ec9">Update...</div>
  </div>

  <!-- red boxes -->
  <div class="red" style="left:350px;top:251px;width:441px;height:29px"></div>
  <div class="red" style="left:618px;top:667px;width:50px;height:34px"></div>
  <div class="red" style="left:748px;top:690px;width:107px;height:36px"></div>
</div>
</body></html>
